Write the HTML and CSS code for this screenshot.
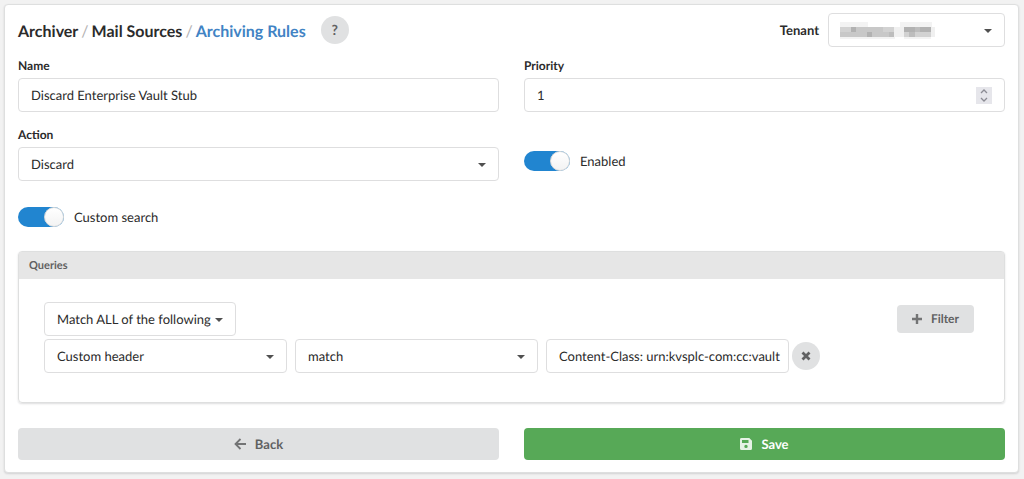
FILE: index.html
```html
<!DOCTYPE html>
<html lang="en">
<head>
    <meta charset="UTF-8">
    <title>Archiving Rules</title>
    <link rel="stylesheet" href="styles.css">
</head>
<body>
    <form class="card">
        <div class="header">
            <h1 class="breadcrumb">
                <a href="#">Archiver</a>
                <span class="divider">/</span>
                <a href="#">Mail Sources</a>
                <span class="divider">/</span>
                <a href="#" class="active">Archiving Rules</a>
            </h1>
            <button type="button" class="circle help" aria-label="Help">?</button>
            <div class="tenant">
                <label for="tenant">Tenant</label>
                <div class="dropdown">
                    <select id="tenant"><option></option></select>
                    <svg class="hidden-name" width="104" height="20" viewBox="0 0 104 20">
                        <path fill="#f3f3f3" d="M4 0h28v5H4zM64 0h32v5H64zM4 15h55v2H4zM68 15h27v2H68z"/>
                        <path fill="#d2d2d2" d="M4 5h54v5H4zM68 5h27v10H68z"/>
                        <path fill="#c8c8c8" d="M4 10h54v5H4zM20 5h27v5H20z"/>
                        <path fill="#b2b2b2" d="M15 5h5v5h-5zM31 10h5v5h-5zM68 5h11v5H68zM84 5h11v5H84z"/>
                        <path fill="#bdbdbd" d="M53 10h5v5h-5zM73 10h6v5h-6zM79 5h5v5h-5z"/>
                        <path fill="#f0f0f0" d="M58 5h10v10H58zM95 5h4v10h-4z"/>
                    </svg>
                </div>
            </div>
        </div>

        <div class="columns">
            <div class="field">
                <label for="name">Name</label>
                <input type="text" id="name" value="Discard Enterprise Vault Stub">
            </div>
            <div class="field">
                <label for="priority">Priority</label>
                <div class="number">
                    <input type="number" id="priority" value="1">
                    <svg class="spinner" width="16" height="17" viewBox="0 0 16 17">
                        <path fill="#e6e6eb" d="M0 0h16v17H0z"/>
                        <path fill="none" stroke="#8c8c94" stroke-width="1.3" d="M5 6l3-3 3 3M5 11l3 3 3-3"/>
                    </svg>
                </div>
            </div>
            <div class="field">
                <label for="action">Action</label>
                <div class="dropdown">
                    <select id="action"><option>Discard</option></select>
                </div>
            </div>
            <div class="toggle enabled">
                <input type="checkbox" id="enabled" checked>
                <label for="enabled">Enabled</label>
            </div>
        </div>

        <div class="toggle custom">
            <input type="checkbox" id="custom" checked>
            <label for="custom">Custom search</label>
        </div>

        <div class="queries">
            <h2>Queries</h2>
            <div class="rules">
                <div class="row">
                    <div class="dropdown fit">
                        <select aria-label="Match type"><option>Match ALL of the following</option></select>
                    </div>
                    <button type="button" class="button filter">
                        <svg width="10" height="10" viewBox="0 0 10 10"><path fill="none" stroke="currentColor" stroke-width="2.4" d="M5 0v10M0 5h10"/></svg>
                        Filter
                    </button>
                </div>
                <div class="row query">
                    <div class="dropdown">
                        <select aria-label="Field"><option>Custom header</option></select>
                    </div>
                    <div class="dropdown">
                        <select aria-label="Operator"><option>match</option></select>
                    </div>
                    <input type="text" aria-label="Value" value="Content-Class: urn:kvsplc-com:cc:vault">
                    <button type="button" class="circle remove" aria-label="Remove">
                        <svg width="10" height="10" viewBox="0 0 10 10"><path fill="none" stroke="currentColor" stroke-width="2.8" d="M1.5 1.5l7 7M8.5 1.5l-7 7"/></svg>
                    </button>
                </div>
            </div>
        </div>

        <div class="columns">
            <button type="button" class="button">
                <svg width="12" height="12" viewBox="0 0 12 12"><path fill="none" stroke="currentColor" stroke-width="1.8" d="M12 6H1.5M6.5 1l-5 5 5 5"/></svg>
                Back
            </button>
            <button type="submit" class="button save">
                <svg width="12" height="12" viewBox="0 0 12 12"><path fill="currentColor" fill-rule="evenodd" d="M1.5 0h7.8L12 2.7v7.8a1.5 1.5 0 0 1-1.5 1.5h-9A1.5 1.5 0 0 1 0 10.5v-9A1.5 1.5 0 0 1 1.5 0zM2 2v3h6.5V2zM6 6.7a1.7 1.7 0 1 0 0 3.4 1.7 1.7 0 0 0 0-3.4z"/></svg>
                Save
            </button>
        </div>
    </form>
</body>
</html>
```
FILE: styles.css
```css
*{
    box-sizing: border-box;
}
body{
    margin: 0;
    padding: 4px 5px 5px 4px;
    background: #f2f2f2;
    color: #2b2b2b;
    font: 13px/18px Lato, sans-serif;
    text-rendering: geometricPrecision;
}
.card{
    padding: 8px 13px 12px;
    background: #fff;
    border: 1px solid #dedfdf;
    border-radius: 4px;
    box-shadow: 0 1px 2px rgba(34,36,38,.15);
}
input,select,button{
    font: inherit;
    color: inherit;
    text-rendering: inherit;
}
input[type=text],input[type=number],select{
    display: block;
    width: 100%;
    height: 34px;
    margin: 0;
    padding: 0 4px 0 12px;
    background: #fff;
    border: 1px solid #dededf;
    border-radius: 4px;
}
label{
    font-size: 12px;
    font-weight: bold;
}
button{
    border: 0;
    background: #e0e1e2;
    color: #606162;
    font-weight: bold;
    cursor: pointer;
}

/* header */
.header{
    display: flex;
    align-items: center;
    margin-bottom: 10px;
}
.breadcrumb{
    display: flex;
    gap: 3px;
    margin: 0;
    padding-top: 3px;
    font-size: 16px;
    line-height: 24px;
}
.breadcrumb a{
    color: inherit;
    text-decoration: none;
}
.breadcrumb .active{
    color: #4183c4;
}
.divider{
    color: #b3b3b3;
    font-weight: normal;
}
.circle{
    display: flex;
    flex: none;
    align-items: center;
    justify-content: center;
    width: 28px;
    height: 28px;
    padding: 0;
    border-radius: 50%;
}
.help{
    margin-left: 15px;
    font-size: 14px;
}
.tenant{
    display: flex;
    align-items: center;
    gap: 9px;
    margin-left: auto;
}
.tenant label{
    font-size: 13px;
}
.tenant .dropdown{
    width: 177px;
}
.hidden-name{
    position: absolute;
    left: 8px;
    top: 9px;
    pointer-events: none;
}

/* fields */
.columns{
    display: grid;
    grid-template-columns: 1fr 1fr;
    gap: 14px 25px;
}
.field label{
    display: block;
    margin-bottom: 3px;
}
.dropdown,.number{
    position: relative;
}
.dropdown select{
    appearance: none;
}
.dropdown::after{
    content: "";
    position: absolute;
    right: 13px;
    top: 16px;
    border: 4px solid transparent;
    border-top-color: #505050;
    border-bottom: 0;
    pointer-events: none;
}
.number input{
    appearance: textfield;
}
.number input::-webkit-inner-spin-button{
    appearance: none;
}
.spinner{
    position: absolute;
    right: 13px;
    top: 9px;
}
.toggle{
    display: flex;
    align-items: center;
    gap: 10px;
}
.toggle label{
    font-size: 13px;
    font-weight: normal;
}
.toggle input{
    appearance: none;
    display: flex;
    justify-content: flex-end;
    width: 46px;
    height: 20px;
    margin: 0;
    background: #2185d0;
    border-radius: 10px;
}
.toggle input::before{
    content: "";
    width: 18px;
    height: 18px;
    background: linear-gradient(#fff, #f3f3f3);
    border: 1px solid #dadada;
    border-radius: 50%;
}
.toggle input:not(:checked){
    justify-content: flex-start;
    background: #ddd;
}
.enabled{
    align-self: start;
    margin-top: 25px;
}
.custom{
    margin: 26px 0 24px;
}

/* queries */
.queries{
    margin-bottom: 25px;
    border: 1px solid #dedfdf;
    border-radius: 4px;
    box-shadow: 0 1px 2px rgba(34,36,38,.15);
}
.queries h2{
    margin: 0;
    padding: 5px 10px 4px;
    background: #e6e6e6;
    color: #606060;
    font-size: 11px;
    line-height: 18px;
}
.rules{
    padding: 23px 30px 29px 25px;
}
.row{
    display: flex;
    align-items: center;
    justify-content: space-between;
    margin-bottom: 3px;
}
.fit select{
    padding-right: 24px;
}
.query{
    justify-content: flex-start;
    gap: 8px;
    margin: 0;
}
.query .dropdown,.query input{
    flex: 0 1 243px;
    min-width: 0;
}
.remove{
    margin-left: -5px;
}
.button{
    display: flex;
    align-items: center;
    justify-content: center;
    gap: 9px;
    height: 32px;
    border-radius: 4px;
}
.filter{
    height: 28px;
    padding: 0 15px;
    font-size: 12px;
}
.save{
    background: #57a957;
    color: #fff;
}
.button svg{
    opacity: .85;
}
```
